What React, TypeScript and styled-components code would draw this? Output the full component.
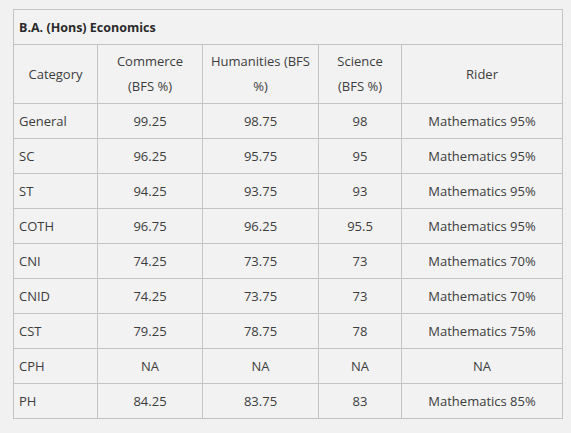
import React from 'react';
import styled, { createGlobalStyle } from 'styled-components';

const GlobalStyle = createGlobalStyle`
  html, body {
    margin: 0;
    padding: 0;
    background: #f1f1f1;
  }
  body {
    font-family: "Open Sans", "Noto Sans", sans-serif;
    color: #3d3d3d;
  }
`;

const Page = styled.div`
  padding: 9px 10px 0 13px;
`;

const Table = styled.table`
  width: 549px;
  table-layout: fixed;
  border-collapse: collapse;
  background: #f2f2f2;
  font-size: 13px;
  border: 1px solid #c4c4c4;
`;

const Caption = styled.th`
  text-align: left;
  font-weight: 700;
  font-size: 12.5px;
  color: #2a2a2a;
  height: 34px;
  padding: 0 5px;
  border: 1px solid #c4c4c4;
`;

const HeadCell = styled.th`
  font-weight: 400;
  text-align: center;
  line-height: 25px;
  height: 58px;
  padding: 0 7px;
  border: 1px solid #c4c4c4;
`;

const Cell = styled.td<{ $left?: boolean }>`
  text-align: ${(p) => (p.$left ? 'left' : 'center')};
  height: 34px;
  padding: 0 5px;
  line-height: 25px;
  border: 1px solid #c4c4c4;
`;

const rows: [string, string, string, string, string][] = [
  ['General', '99.25', '98.75', '98', 'Mathematics 95%'],
  ['SC', '96.25', '95.75', '95', 'Mathematics 95%'],
  ['ST', '94.25', '93.75', '93', 'Mathematics 95%'],
  ['COTH', '96.75', '96.25', '95.5', 'Mathematics 95%'],
  ['CNI', '74.25', '73.75', '73', 'Mathematics 70%'],
  ['CNID', '74.25', '73.75', '73', 'Mathematics 70%'],
  ['CST', '79.25', '78.75', '78', 'Mathematics 75%'],
  ['CPH', 'NA', 'NA', 'NA', 'NA'],
  ['PH', '84.25', '83.75', '83', 'Mathematics 85%'],
];

const App: React.FC = () => {
  return (
    <Page>
      <GlobalStyle />
      <Table>
        <colgroup>
          <col style={{ width: 84 }} />
          <col style={{ width: 105 }} />
          <col style={{ width: 116 }} />
          <col style={{ width: 83 }} />
          <col style={{ width: 161 }} />
        </colgroup>
        <thead>
          <tr>
            <Caption colSpan={5}>B.A. (Hons) Economics</Caption>
          </tr>
          <tr>
            <HeadCell>Category</HeadCell>
            <HeadCell>Commerce (BFS %)</HeadCell>
            <HeadCell>Humanities (BFS %)</HeadCell>
            <HeadCell>Science (BFS %)</HeadCell>
            <HeadCell>Rider</HeadCell>
          </tr>
        </thead>
        <tbody>
          {rows.map((r) => (
            <tr key={r[0]}>
              <Cell $left>{r[0]}</Cell>
              <Cell>{r[1]}</Cell>
              <Cell>{r[2]}</Cell>
              <Cell>{r[3]}</Cell>
              <Cell>{r[4]}</Cell>
            </tr>
          ))}
        </tbody>
      </Table>
    </Page>
  );
};

export default App;
